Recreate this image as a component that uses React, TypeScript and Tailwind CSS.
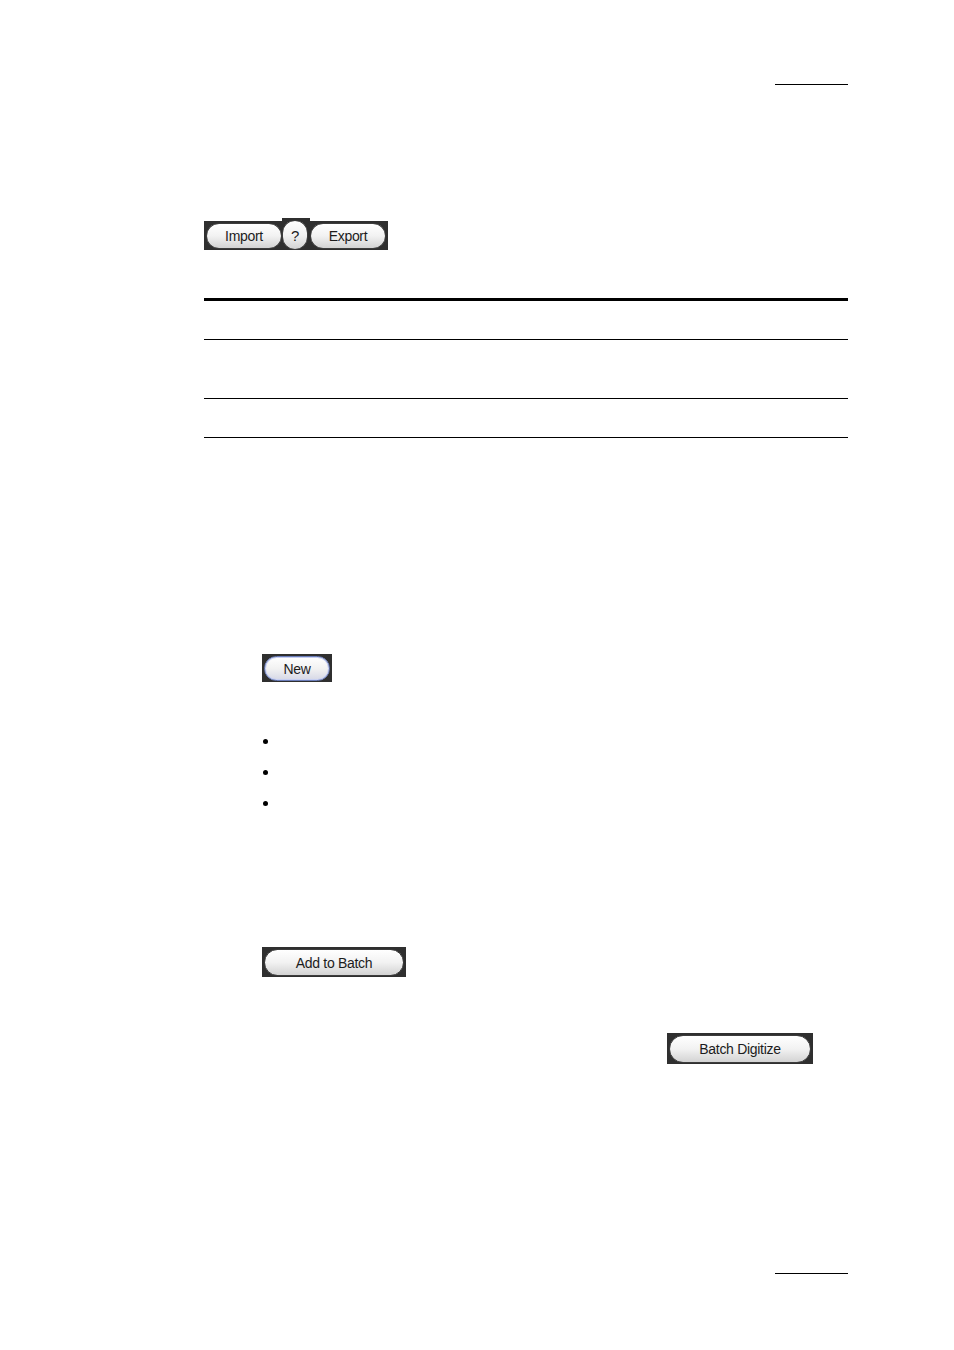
import React from 'react';

const font = { fontFamily: '"Liberation Sans", Arial, sans-serif' };

type PillProps = {
  label: string;
  className?: string;
  pillClass?: string;
};

const Pill: React.FC<PillProps> = ({ label, className = '', pillClass = '' }) => (
  <div className={`bg-[#2f2f2f] flex ${className}`}>
    <div
      className={`flex-1 flex items-center justify-center rounded-full border border-[#3c3c3c] bg-linear-to-b from-white via-[#f2f2f2] to-[#d3d3d3] text-[14px] leading-none text-[#1c1c1c] tracking-[-0.3px] ${pillClass}`}
    >
      {label}
    </div>
  </div>
);

const App: React.FC = () => {
  return (
    <div className="w-[954px] h-[1350px] bg-white flex flex-col overflow-hidden" style={font}>
      {/* header rule */}
      <div className="ml-[775px] mt-[84px] w-[73px] h-px bg-black" />

      {/* import / help / export */}
      <div className="ml-[204px] mt-[133px] flex items-end h-[32px]">
        <Pill label="Import" className="w-[78px] h-[29px] pl-[2px] pt-[2px] pb-[1px]" />
        <Pill label="?" className="w-[28px] h-[32px] pt-[2px] pr-[2px]" pillClass="text-[15px]" />
        <Pill label="Export" className="w-[78px] h-[29px] pr-[2px] pt-[2px] pb-[1px]" />
      </div>

      {/* table rules */}
      <div className="ml-[204px] w-[644px] flex flex-col">
        <div className="mt-[48px] h-[3px] bg-black" />
        <div className="mt-[38px] h-px bg-black" />
        <div className="mt-[58px] h-px bg-black" />
        <div className="mt-[38px] h-px bg-black" />
      </div>

      {/* new */}
      <Pill
        label="New"
        className="ml-[262px] mt-[216px] w-[70px] h-[28px] p-[2px] pb-px"
        pillClass="border-[#6a7cb8] shadow-[inset_0_0_0_1px_#c8d0f2] to-[#d6d8e6]"
      />

      {/* bullets */}
      <ul className="ml-[263px] mt-[57px] flex flex-col gap-[26px]">
        <li className="w-[5px] h-[5px] rounded-full bg-black" />
        <li className="w-[5px] h-[5px] rounded-full bg-black" />
        <li className="w-[5px] h-[5px] rounded-full bg-black" />
      </ul>

      {/* add to batch */}
      <Pill label="Add to Batch" className="ml-[262px] mt-[141px] w-[144px] h-[30px] p-[2px] pb-px" />

      {/* batch digitize */}
      <Pill label="Batch Digitize" className="ml-[667px] mt-[56px] w-[146px] h-[31px] p-[2px] pb-px" />

      {/* footer rule */}
      <div className="ml-[775px] mt-[209px] w-[73px] h-px bg-black" />
    </div>
  );
};

export default App;
